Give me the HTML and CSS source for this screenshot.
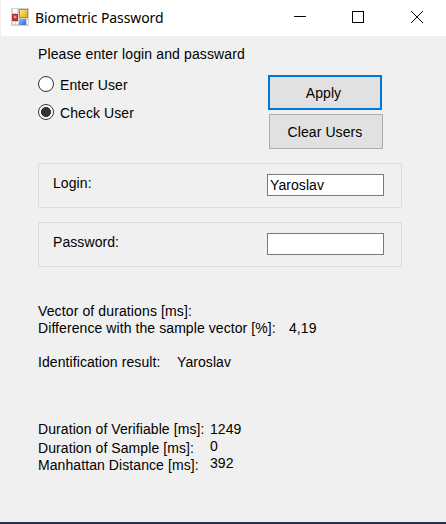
FILE: index.html
```html
<!DOCTYPE html>
<html lang="en">
<head>
<meta charset="utf-8">
<title>Biometric Password</title>
<link rel="stylesheet" href="styles.css">
</head>
<body>
<div class="window">
  <header class="titlebar">
    <svg class="app-icon" width="18" height="18" viewBox="0 0 18 18" shape-rendering="crispEdges">
      <defs>
        <linearGradient id="gold" x1="0" y1="0" x2="1" y2="1"><stop offset="0" stop-color="#ffe98a"/><stop offset="1" stop-color="#eba900"/></linearGradient>
        <linearGradient id="blue" x1="0" y1="0" x2="1" y2="1"><stop offset="0" stop-color="#8dbcff"/><stop offset="1" stop-color="#2869d8"/></linearGradient>
      </defs>
      <rect width="18" height="18" fill="#d2d2d2"/>
      <rect x="2" y="1" width="4" height="4" fill="#fff"/>
      <rect x="1" y="6" width="6" height="7" fill="#b52d25"/>
      <rect x="2" y="7" width="4" height="4" fill="#cc4c44"/>
      <rect x="3" y="8" width="2" height="2" fill="#e79a90"/>
      <rect x="8" y="1" width="9" height="9" fill="#c48a10"/>
      <rect x="9" y="2" width="7" height="7" fill="url(#gold)"/>
      <rect x="8" y="11" width="7" height="6" fill="url(#blue)"/>
      <rect x="2" y="14" width="2" height="2" fill="#fff"/>
      <rect x="5" y="14" width="2" height="2" fill="#fff"/>
      <rect x="16" y="12" width="1" height="4" fill="#fff"/>
    </svg>
    <h1 class="title">Biometric Password</h1>
    <svg class="controls" width="133" height="14" viewBox="0 0 133 14" fill="none" stroke="#000">
      <path d="M0 6.5h12"/>
      <rect x="58.5" y="1.5" width="11" height="11"/>
      <path d="M117 1l12 12M129 1l-12 12"/>
    </svg>
  </header>
  <main class="form">
    <p class="text prompt">Please enter login and passward</p>
    <div class="top">
      <div class="radios">
        <div class="radio"><span class="dot"></span><span class="text enter">Enter User</span></div>
        <div class="radio"><span class="dot checked"></span><span class="text check">Check User</span></div>
      </div>
      <div class="buttons">
        <button class="text button primary">Apply</button>
        <button class="text button clear">Clear Users</button>
      </div>
    </div>
    <div class="group"><span class="text login">Login:</span><div class="text field">Yaroslav</div></div>
    <div class="group"><span class="text password">Password:</span><div class="text field"></div></div>
    <div class="results">
      <p class="text vector">Vector of durations [ms]:</p>
      <div class="row"><span class="text difference">Difference with the sample vector [%]:</span><span class="text value">4,19</span></div>
      <div class="row identity"><span class="text identification">Identification result:</span><span class="text person">Yaroslav</span></div>
    </div>
    <div class="totals">
      <div class="labels">
        <p class="text verifiable">Duration of Verifiable [ms]:</p>
        <p class="text sample">Duration of Sample [ms]:</p>
        <p class="text distance">Manhattan Distance [ms]:</p>
      </div>
      <div class="values">
        <p class="text number">1249</p>
        <p class="text number">0</p>
        <p class="text number">392</p>
      </div>
    </div>
  </main>
</div>
</body>
</html>
```
FILE: styles.css
```css
* { box-sizing: border-box; margin: 0; padding: 0; }
body { width: 446px; height: 524px; overflow: hidden; }
.window { height: 524px; background: #f0f0f0; border-bottom: 2px solid #27304d; }
.titlebar { height: 36px; background: #fff; border-left: 1px solid #f0f0f0; display: flex; align-items: flex-start; }
.app-icon { margin: 8px 0 0 10px; }
.title { margin: 8px 0 0 6px; font: 400 14px/20px "Noto Sans", sans-serif; letter-spacing: -0.1px; color: #000; white-space: nowrap; }
.controls { margin: 10px 19px 0 auto; }
.form { padding: 10px 44px 0 38px; }
.text { font: 14px/16px "Liberation Sans", Arial, sans-serif; letter-spacing: 0.08px; color: #000; white-space: nowrap; }
.prompt, .vector { letter-spacing: 0.12px; }
.top { display: flex; justify-content: space-between; height: 101px; }
.radios { padding-top: 14px; }
.radio { display: flex; align-items: flex-start; gap: 6px; height: 28px; }
.radio .text { margin-top: 1px; }
.dot { width: 16px; height: 16px; border: 1px solid #333; border-radius: 50%; background: #fff; }
.dot.checked { background: radial-gradient(circle, #333 4.7px, #fff 5.3px); }
.buttons { display: flex; flex-direction: column; gap: 4px; margin-right: 19px; padding-top: 13px; }
.button { width: 114px; height: 35px; background: #e1e1e1; border: 1px solid #adadad; }
.primary { border: 2px solid #0078d7; margin-left: -1px; padding-right: 3px; }
.clear { padding: 1px 2px 0 0; }
.group { width: 364px; height: 45px; border: 1px solid #dcdcdc; display: flex; justify-content: space-between; padding: 10px 17px 0 14px; margin-bottom: 14px; }
.group .text { margin-top: 1px; }
.group .field { width: 117px; height: 22px; margin-top: 0; border: 1px solid #7a7a7a; background: #fff; padding: 2px 0 0 2px; }
.results { padding-top: 22px; }
.row { display: flex; margin-top: 1px; }
.identity { margin-top: 18px; }
.difference { width: 251px; }
.identification { width: 139px; }
.totals { display: flex; margin-top: 51px; }
.labels { width: 172px; }
.sample { margin-top: 3px; }
.distance, .number + .number { margin-top: 1px; }
```
